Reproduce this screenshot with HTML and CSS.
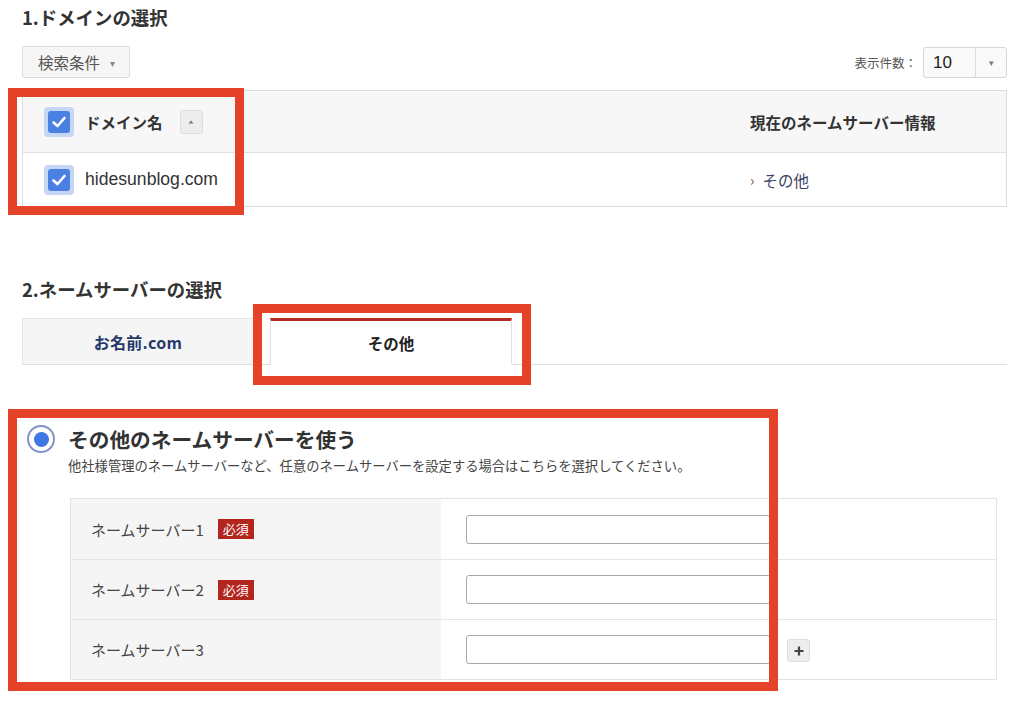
FILE: index.html
```html
<!DOCTYPE html>
<html lang="ja">
<head>
<meta charset="utf-8">
<title>ネームサーバーの変更</title>
<link rel="stylesheet" href="styles.css">
</head>
<body>
<div class="page">
  <h2 class="section-title">1.ドメインの選択</h2>
  <div class="toolbar">
    <button class="search-btn">検索条件<span class="caret">▾</span></button>
    <div class="per-page">
      <span class="per-label">表示件数：</span>
      <div class="select"><span class="select-val">10</span><span class="select-arrow">▾</span></div>
    </div>
  </div>
  <div class="domain-table">
    <div class="dt-row dt-head">
      <div class="dt-name">
        <span class="check"><span class="check-inner"><svg viewBox="0 0 20 20" width="20" height="20"><path d="M4.5 10.5 L8.5 14 L15.5 6" fill="none" stroke="#fff" stroke-width="2.6" stroke-linecap="round" stroke-linejoin="round"/></svg></span></span>
        <span class="head-text">ドメイン名</span>
        <span class="sort-btn"><svg viewBox="0 0 8 8" width="8" height="8"><path d="M1.5 5.5 L4 2.5 L6.5 5.5Z" fill="#777"/></svg></span>
      </div>
      <div class="dt-ns head-text">現在のネームサーバー情報</div>
    </div>
    <div class="dt-row dt-body">
      <div class="dt-name">
        <span class="check"><span class="check-inner"><svg viewBox="0 0 20 20" width="20" height="20"><path d="M4.5 10.5 L8.5 14 L15.5 6" fill="none" stroke="#fff" stroke-width="2.6" stroke-linecap="round" stroke-linejoin="round"/></svg></span></span>
        <span class="domain-text">hidesunblog.com</span>
      </div>
      <div class="dt-ns"><span class="ns-arrow">›</span><span class="ns-link">その他</span></div>
    </div>
  </div>

  <h2 class="section-title second">2.ネームサーバーの選択</h2>
  <div class="tabs">
    <div class="tab tab-off">お名前.com</div>
    <div class="tab tab-on">その他</div>
  </div>

  <div class="option">
    <div class="option-head">
      <span class="radio"><span class="radio-dot"></span></span>
      <span class="option-title">その他のネームサーバーを使う</span>
    </div>
    <p class="option-desc">他社様管理のネームサーバーなど、任意のネームサーバーを設定する場合はこちらを選択してください。</p>
    <div class="ns-form">
      <div class="ns-row">
        <div class="ns-label">ネームサーバー1<span class="req">必須</span></div>
        <div class="ns-field"><input class="ns-input" type="text"></div>
      </div>
      <div class="ns-row">
        <div class="ns-label">ネームサーバー2<span class="req">必須</span></div>
        <div class="ns-field"><input class="ns-input" type="text"></div>
      </div>
      <div class="ns-row">
        <div class="ns-label">ネームサーバー3</div>
        <div class="ns-field"><input class="ns-input" type="text"><span class="plus-btn"><svg viewBox="0 0 12 12" width="12" height="12"><path d="M6 1.5V10.5M1.5 6H10.5" stroke="#444" stroke-width="2.2"/></svg></span></div>
      </div>
    </div>
  </div>
</div>
<div class="mark mark-1"></div>
<div class="mark mark-2"></div>
<div class="mark mark-3"></div>
</body>
</html>
```

FILE: styles.css
```css
* { box-sizing: border-box; }
html, body { margin: 0; padding: 0; background: #fff; }
body {
  position: relative;
  width: 1024px;
  height: 702px;
  overflow: hidden;
  font-family: "Noto Sans CJK JP", "Liberation Sans", sans-serif;
  color: #333;
}
.page {
  padding: 5px 17px 0 22px;
}
.section-title {
  margin: 0;
  font-size: 18.4px;
  line-height: 24px;
  font-weight: 700;
  color: #333;
}
.section-title.second { margin-top: 70px; }

.toolbar {
  margin-top: 17px;
  display: flex;
  justify-content: space-between;
  align-items: center;
  height: 32px;
}
.search-btn {
  height: 32px;
  width: 108px;
  padding: 0 0 0 15px;
  display: flex;
  align-items: center;
  background: #f6f6f6;
  border: 1px solid #dcdcdc;
  border-radius: 2px;
  font-family: "Noto Sans CJK JP", sans-serif;
  font-size: 15.5px;
  color: #555;
}
.caret { font-size: 10px; color: #888; margin-left: 10px; }
.per-page { display: flex; align-items: center; }
.per-label { font-size: 12.5px; color: #555; margin-right: 6px; }
.select {
  width: 84px;
  height: 31px;
  display: flex;
  border: 1px solid #d6d6d6;
  border-radius: 3px;
  background: #fafafa;
}
.select-val {
  width: 52px;
  border-right: 1px solid #ddd;
  padding-left: 9px;
  font-family: "Liberation Sans", sans-serif;
  font-size: 17px;
  line-height: 29px;
  color: #222;
}
.select-arrow { flex: 1; text-align: center; font-size: 9px; line-height: 29px; color: #777; }

.domain-table {
  margin-top: 12px;
  border: 1px solid #dcdcdc;
}
.dt-row { display: flex; align-items: center; }
.dt-head { height: 62px; background: #f7f7f7; border-bottom: 1px solid #e0e0e0; }
.dt-body { height: 53px; background: #fff; }
.dt-name { flex: 0 0 727px; display: flex; align-items: center; padding-left: 21px; }
.dt-ns { flex: 1; display: flex; align-items: center; }
.head-text { font-size: 15.5px; font-weight: 700; color: #333; }
.check {
  width: 30px; height: 30px;
  border-radius: 4px;
  background: #c6d6f5;
  display: flex; align-items: center; justify-content: center;
  margin-right: 11px;
}
.check-inner {
  width: 22px; height: 22px;
  border-radius: 3px;
  background: #4b80e3;
  display: flex; align-items: center; justify-content: center;
}
.check-inner svg { display: block; }
.sort-btn {
  width: 23px; height: 24px;
  margin-left: 17px;
  background: #ededed;
  border: 1px solid #dedede;
  border-radius: 3px;
  display: flex; align-items: center; justify-content: center;
}
.domain-text { font-family: "Liberation Sans", sans-serif; font-size: 17.6px; color: #333; }
.ns-arrow { font-size: 15px; color: #8b4a55; margin-right: 8px; }
.ns-link { font-size: 15.5px; color: #3a4266; }

.tabs {
  margin-top: 18px;
  display: flex;
  align-items: flex-end;
  gap: 16px;
  height: 46px;
  border-bottom: 1px solid #dedede;
}
.tab {
  height: 46px;
  display: flex; align-items: center; justify-content: center;
  font-size: 15.5px; font-weight: 700;
}
.tab-off {
  width: 232px;
  background: #f5f5f5;
  border: 1px solid #e6e6e6;
  border-bottom: none;
  color: #27386b;
  font-size: 16px;
  letter-spacing: 0.3px;
}
.tab-on {
  width: 242px;
  background: #fff;
  border: 1px solid #e0e0e0;
  border-top: 3px solid #b52a22;
  border-bottom: 1px solid #fff;
  margin-bottom: -1px;
  height: 47px;
  color: #222;
}

.option { margin-top: 60px; }
.option-head { display: flex; align-items: center; padding-left: 5px; }
.radio {
  width: 28px; height: 28px;
  border-radius: 50%;
  border: 2px solid #8196c6;
  background: #fff;
  display: flex; align-items: center; justify-content: center;
  margin-right: 13px;
}
.radio-dot { width: 15px; height: 15px; border-radius: 50%; background: #3f78e2; }
.option-title { font-size: 20.7px; font-weight: 700; color: #333; line-height: 28px; }
.option-desc { margin: 3px 0 0 46px; font-size: 13.3px; line-height: 20px; color: #444; }

.ns-form {
  margin: 22px 10px 0 48px;
  border: 1px solid #e3e3e3;
}
.ns-row { display: flex; height: 60px; border-top: 1px solid #e6e6e6; }
.ns-row:first-child { border-top: none; height: 60px; }
.ns-label {
  flex: 0 0 370px;
  background: #f5f5f5;
  display: flex; align-items: center;
  padding-left: 20px;
  font-size: 15px;
  color: #444;
}
.req {
  margin-left: 14px;
  background: #b3261e;
  color: #fff;
  font-size: 13px;
  line-height: 20px;
  padding: 0 5px;
}
.ns-field { flex: 1; display: flex; align-items: center; padding-left: 25px; }
.ns-input {
  width: 305px; height: 29px;
  border: 1px solid #a8a8a8;
  border-radius: 3px;
  background: #fff;
  margin: 0;
}
.plus-btn {
  width: 23px; height: 23px;
  margin-left: 16px;
  margin-top: 2px;
  background: #eee;
  border: 1px solid #ddd;
  border-radius: 3px;
  display: flex; align-items: center; justify-content: center;
}

.mark {
  position: absolute;
  border: 9px solid #e4432a;
  pointer-events: none;
}
.mark-1 { left: 8px; top: 88px; width: 236px; height: 127px; }
.mark-2 { left: 253px; top: 304px; width: 278px; height: 81px; }
.mark-3 { left: 8px; top: 409px; width: 770px; height: 282px; }
```
